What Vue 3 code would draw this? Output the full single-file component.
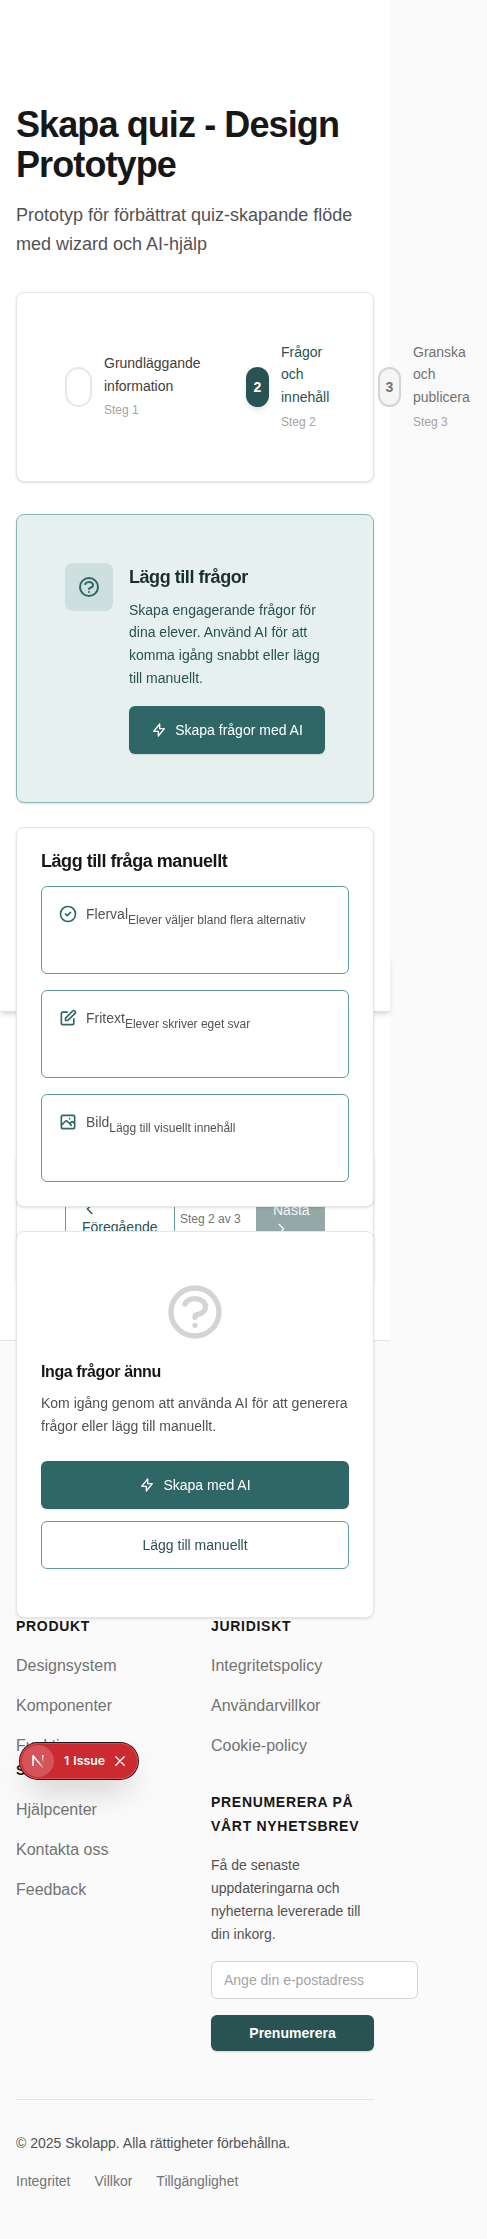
<script setup>
const steps = [
  { n: '', lines: ['Grundläggande', 'information'], label: 'Steg 1', state: 'done' },
  { n: '2', lines: ['Frågor', 'och', 'innehåll'], label: 'Steg 2', state: 'active' },
  { n: '3', lines: ['Granska', 'och', 'publicera'], label: 'Steg 3', state: 'todo' },
]
const help = 'M8.228 9c.549-1.165 2.03-2 3.772-2 2.21 0 4 1.343 4 3 0 1.4-1.278 2.575-3.006 2.907-.542.104-.994.54-.994 1.093m0 3h.01M21 12a9 9 0 11-18 0 9 9 0 0118 0z'
const bolt = 'M13 10V3L4 14h7v7l9-11h-7z'
const options = [
  { title: 'Flerval', text: 'Elever väljer bland flera alternativ', icon: 'M9 12l2 2 4-4m6 2a9 9 0 11-18 0 9 9 0 0118 0z' },
  { title: 'Fritext', text: 'Elever skriver eget svar', icon: 'M11 5H6a2 2 0 00-2 2v11a2 2 0 002 2h11a2 2 0 002-2v-5m-1.414-9.414a2 2 0 112.828 2.828L11.828 15H9v-2.828l8.586-8.586z' },
  { title: 'Bild', text: 'Lägg till visuellt innehåll', icon: 'M4 16l4.586-4.586a2 2 0 012.828 0L16 16m-2-2l1.586-1.586a2 2 0 012.828 0L20 14m-6-6h.01M6 20h12a2 2 0 002-2V6a2 2 0 00-2-2H6a2 2 0 00-2 2v12a2 2 0 002 2z' },
]
</script>

<template>
  <div class="page">
    <main class="main">
      <header class="intro">
        <h1>Skapa quiz - Design Prototype</h1>
        <p>Prototyp för förbättrat quiz-skapande flöde med wizard och AI-hjälp</p>
      </header>

      <section class="card steps">
        <div v-for="s in steps" :key="s.label" class="step" :class="s.state">
          <span class="dot">{{ s.n }}</span>
          <div class="step-text">
            <div v-for="l in s.lines" :key="l" class="step-line">{{ l }}</div>
            <div class="step-label">{{ s.label }}</div>
          </div>
        </div>
      </section>

      <div class="panel-anchor"><div class="panel"></div></div>

      <div class="content">
        <section class="card hero">
          <span class="hero-icon">
            <svg width="24" height="24" viewBox="0 0 24 24"><path :d="help" /></svg>
          </span>
          <div class="hero-body">
            <h2>Lägg till frågor</h2>
            <p>Skapa engagerande frågor för dina elever. Använd AI för att komma igång snabbt eller lägg till manuellt.</p>
            <button class="btn primary">
              <svg width="16" height="16" viewBox="0 0 24 24"><path :d="bolt" /></svg>Skapa frågor med AI
            </button>
          </div>
        </section>

        <section class="card manual">
          <h2>Lägg till fråga manuellt</h2>
          <div v-for="o in options" :key="o.title" class="option">
            <svg width="20" height="20" viewBox="0 0 24 24"><path :d="o.icon" /></svg>
            <span class="option-title">{{ o.title }}</span>
            <span class="option-text">{{ o.text }}</span>
          </div>
        </section>

        <section class="card empty">
          <svg width="64" height="64" viewBox="0 0 24 24"><path :d="help" /></svg>
          <h3>Inga frågor ännu</h3>
          <p>Kom igång genom att använda AI för att generera frågor eller lägg till manuellt.</p>
          <button class="btn primary">
            <svg width="16" height="16" viewBox="0 0 24 24"><path :d="bolt" /></svg>Skapa med AI
          </button>
          <button class="btn outline">Lägg till manuellt</button>
        </section>
      </div>

      <nav class="card pager">
        <button class="pg prev">
          <svg width="16" height="16" viewBox="0 0 24 24"><path d="M15 19l-7-7 7-7" /></svg>
          <span>Föregående</span>
        </button>
        <span class="pg-label">Steg 2 av 3</span>
        <button class="pg next">
          <span>Nästa</span>
          <svg width="16" height="16" viewBox="0 0 24 24"><path d="M9 5l7 7-7 7" /></svg>
        </button>
      </nav>
    </main>

    <footer class="footer">
      <div class="cols">
        <div>
          <h4>Produkt</h4>
          <ul><li>Designsystem</li><li>Komponenter</li><li>Funktioner</li></ul>
          <h4>Support</h4>
          <ul><li>Hjälpcenter</li><li>Kontakta oss</li><li>Feedback</li></ul>
        </div>
        <div>
          <h4>Juridiskt</h4>
          <ul><li>Integritetspolicy</li><li>Användarvillkor</li><li>Cookie-policy</li></ul>
          <h4 class="news">Prenumerera på vårt nyhetsbrev</h4>
          <p>Få de senaste uppdateringarna och nyheterna levererade till din inkorg.</p>
          <input type="email" placeholder="Ange din e-postadress" />
          <button class="subscribe">Prenumerera</button>
        </div>
      </div>
      <div class="legal">
        <p>© 2025 Skolapp. Alla rättigheter förbehållna.</p>
        <div class="legal-links"><span>Integritet</span><span>Villkor</span><span>Tillgänglighet</span></div>
      </div>
    </footer>

    <div class="toast">
      <span class="toast-logo">
        <svg width="14" height="16" viewBox="0 0 14 16">
          <defs>
            <linearGradient id="fadeDiag" x1="8" y1="9" x2="13" y2="15" gradientUnits="userSpaceOnUse"><stop stop-color="#fff" /><stop offset="1" stop-color="#fff" stop-opacity="0.1" /></linearGradient>
            <linearGradient id="fadeBar" x1="0" y1="2" x2="0" y2="10" gradientUnits="userSpaceOnUse"><stop stop-color="#fff" /><stop offset="1" stop-color="#fff" stop-opacity="0" /></linearGradient>
          </defs>
          <path d="M2 13V2.8L12.2 15" stroke="url(#fadeDiag)" />
          <rect x="11" y="2" width="1.5" height="8" fill="url(#fadeBar)" stroke="none" />
        </svg>
      </span>
      <span class="toast-text">1 Issue</span>
      <svg class="toast-x" width="10" height="10" viewBox="0 0 10 10"><path d="M.8.8l8.4 8.4M9.2.8L.8 9.2" /></svg>
    </div>
  </div>
</template>

<style>
html, body { background: #fafafa; overflow: hidden; }
</style>

<style scoped>
.page { position: relative; width: 390px; height: 2239px; font-family: "Liberation Sans", Arial, sans-serif; color: #171717; font-size: 14px; line-height: 22.75px; }
* { box-sizing: border-box; }
h1, h2, h3, h4, p, ul { margin: 0; padding: 0; }
ul { list-style: none; }
svg { fill: none; stroke: currentColor; stroke-width: 2; stroke-linecap: round; stroke-linejoin: round; flex-shrink: 0; display: block; }
button { font: inherit; margin: 0; }
.main { height: 1340px; background: #fff; padding: 105px 16px 0; }
.intro { height: 187px; }
h1 { font-size: 36px; line-height: 40px; letter-spacing: -0.9px; font-weight: 700; }
.intro p { margin-top: 16px; font-size: 18px; line-height: 29.25px; color: #525252; }
.card { background: #fff; border: 1px solid #e5e5e5; border-radius: 8px; box-shadow: 0 1px 3px rgba(0,0,0,.1), 0 1px 2px -1px rgba(0,0,0,.1); }
.steps { height: 190px; padding: 0 48px; display: flex; align-items: center; position: relative; z-index: 1; }
.step { display: flex; align-items: center; flex-shrink: 0; }
.step.done { width: 181px; }
.step.active { width: 132px; }
.dot { width: 23px; height: 40px; border-radius: 12px; display: flex; align-items: center; justify-content: center; font-weight: 700; margin-right: 12px; }
.done .dot { width: 27px; border-radius: 14px; border: 2px solid #e5e7eb; background: #fff; }
.active .dot { background: #285352; color: #fff; box-shadow: 0 4px 6px -1px rgba(0,0,0,.1), 0 2px 4px -2px rgba(0,0,0,.1); }
.todo .dot { background: #f5f5f5; border: 2px solid #d4d4d4; color: #737373; }
.done .step-line { color: #404040; }
.active .step-line { color: #285352; }
.todo .step-line { color: #737373; }
.step-label { font-size: 12px; line-height: 19.5px; margin-top: 3.8px; color: #a3a3a3; }
.step-text { padding-bottom: 1.4px; }
.panel-anchor { height: 0; margin: 0 -16px; }
.panel { height: 57px; transform: translateY(473px); background: #fff; border-bottom: 1px solid #e0e0e0; box-shadow: 0 4px 6px -1px rgba(0,0,0,.1), 0 2px 4px -2px rgba(0,0,0,.1); }
.content { position: relative; z-index: 2; margin-top: 32px; height: 636px; will-change: transform; }
.hero { height: 289px; padding: 48px; background: #e6f0ee; border-color: #86b7b6; display: flex; gap: 16px; align-items: flex-start; }
.hero-icon { width: 48px; height: 48px; border-radius: 8px; background: #cddfde; color: #2f6766; display: flex; align-items: center; justify-content: center; flex-shrink: 0; }
.hero h2 { font-size: 18px; line-height: 28px; letter-spacing: -0.45px; color: #1a2e2e; }
.hero p { margin: 8px 0 16px; color: #285352; position: relative; top: -.3px; }
.btn { display: flex; width: 100%; height: 48px; align-items: center; justify-content: center; gap: 8px; border-radius: 6px; border: 0; padding: 0; }
.primary { background: #2f6766; color: #fff; box-shadow: 0 1px 2px rgba(0,0,0,.1); }
.outline { background: #fff; border: 1px solid #5f9c9a; color: #285352; margin-top: 12px; }
.manual { margin-top: 24px; height: 380px; padding: 24px; }
.manual h2 { font-size: 18px; line-height: 18px; letter-spacing: -0.45px; margin-bottom: 16px; }
.option { display: flex; align-items: flex-start; height: 88px; border: 1px solid #5f9c9a; border-radius: 6px; padding: 17px 16px; color: #525252; }
.option + .option { margin-top: 16px; }
.option svg { color: #2f6766; margin-right: 8px; }
.option-title { line-height: 20px; }
.option-text { font-size: 12px; line-height: 20px; padding-top: 6px; }
.empty { margin-top: 24px; height: 387px; padding: 48px 24px; }
.empty > svg { color: #d4d4d4; margin: 0 auto 16px; }
.empty h3 { font-size: 16px; line-height: 24px; letter-spacing: -0.4px; }
.empty p { margin: 8px 0 24px; height: 45px; color: #525252; }
.pager { height: 138px; padding: 0 48px; display: flex; align-items: center; }
.pg { height: 64px; border-radius: 6px; padding: 13px 16px 3px; display: flex; flex-direction: column; text-align: left; }
.pg span { line-height: 22px; }
.prev { width: 110px; border: 1px solid #5f9c9a; background: #fff; color: #285352; }
.prev span { margin-top: -1px; }
.next { width: 69px; border: 0; background: #93a8a7; color: #f5f8f8; margin-left: auto; padding: 12px 16px 4px 17px; }
.pg-label { font-size: 12px; color: #737373; margin-left: 5px; }
.footer { height: 899px; border-top: 1px solid #e5e5e5; background: #fafafa; padding: 273px 16px 0; }
.cols { display: grid; grid-template-columns: 163px 163px; gap: 32px; }
h4 { font-size: 14px; line-height: 24px; letter-spacing: .7px; text-transform: uppercase; }
ul { padding-top: 16px; }
li { font-size: 16px; line-height: 24px; color: #737373; }
li + li { margin-top: 16px; }
.news { margin-top: 32px; }
.cols p { margin: 16px 0; color: #525252; height: 91px; position: relative; top: .4px; }
input { display: block; width: 207px; height: 38px; border: 1px solid #d4d4d4; border-radius: 6px; padding: 0 12px; font: 14px "Liberation Sans", Arial, sans-serif; background: #fff; }
input::placeholder { color: #a3a3a3; }
.subscribe { display: block; width: 163px; height: 36px; margin-top: 16px; border: 0; border-radius: 6px; background: #285352; color: #fff; font-weight: 700; box-shadow: 0 1px 2px rgba(0,0,0,.15); }
.legal { margin-top: 48px; border-top: 1px solid #e5e5e5; padding-top: 32px; color: #525252; }
.legal-links { display: flex; gap: 24px; margin-top: 15px; color: #737373; }
.toast { position: absolute; left: 20px; top: 1743px; width: 118px; height: 36px; border-radius: 18px; background: #ca2a30; box-shadow: 0 0 0 1px #171717, inset 0 0 0 1px #e5484d, 0 16px 32px -8px rgba(0,0,0,.24); display: flex; align-items: center; padding-left: 2px; color: #fff; z-index: 5; }
.toast-logo { width: 32px; height: 32px; border-radius: 50%; background: rgba(255,255,255,.2); display: flex; align-items: center; justify-content: center; }
.toast-logo svg { stroke-linecap: butt; stroke-width: 1.6; }
.toast-text { font: 600 12.3px/16px Inter, sans-serif; word-spacing: 1px; margin-left: 10px; width: 42px; white-space: nowrap; }
.toast-x { stroke-width: 1.3; margin-left: 9px; }
</style>
